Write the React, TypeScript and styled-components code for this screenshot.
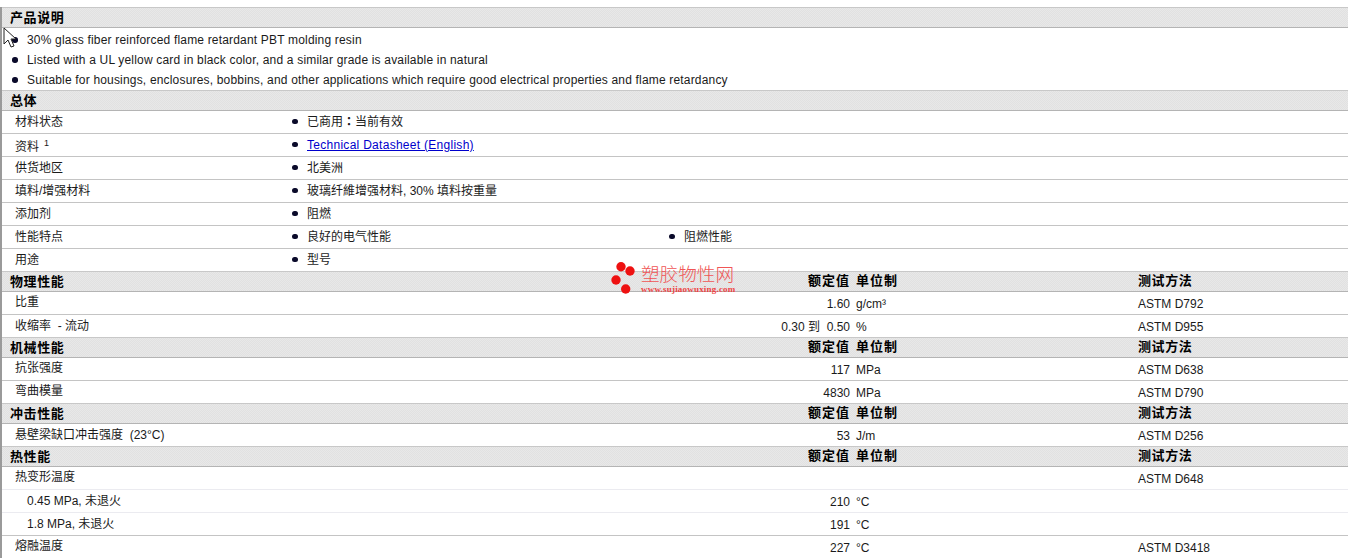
import React from "react";
import styled, { createGlobalStyle } from "styled-components";

const GlobalStyle = createGlobalStyle`
  html, body {
    margin: 0;
    padding: 0;
    background: #fff;
    overflow: hidden;
  }
  body {
    font-family: "Liberation Sans", "Noto Sans CJK SC", sans-serif;
    font-size: 12px;
    line-height: 14px;
    color: #1a1a1a;
  }
`;

const Page = styled.div`
  position: relative;
  width: 1348px;
  height: 558px;
  padding-top: 7px;
  box-sizing: border-box;
  overflow: hidden;
`;

const Sheet = styled.div`
  border-left: 2px solid #9a9a9a;
`;

const SectionHead = styled.div`
  display: grid;
  grid-template-columns: 770px 70px 288px 1fr;
  align-items: center;
  box-sizing: border-box;
  height: 21px;
  padding-left: 8px;
  background-color: #e4e4e4;
  background-image: repeating-conic-gradient(#e1e1e1 0 25%, #e8e8e8 0 50%);
  background-size: 2px 2px;
  border-top: 1px solid #c8c8c8;
  border-bottom: 1px solid #b4b4b4;
  font-weight: 700;
  font-size: 13px;
  letter-spacing: 0.6px;
  color: #000;
`;

const HeadTest = styled.span`
  padding-bottom: 2px;
`;

const HeadValue = styled.span`
  text-align: right;
  letter-spacing: 1px;
  padding-bottom: 2px;
`;

const HeadUnit = styled.span`
  padding-left: 6px;
  padding-bottom: 2px;
  letter-spacing: 1px;
`;

const Notes = styled.ul`
  list-style: none;
  margin: 0;
  padding: 2px 0 0;
`;

const Note = styled.li`
  display: flex;
  align-items: center;
  height: 20px;
  padding-left: 10px;
  letter-spacing: 0.18px;
`;

const Dot = styled.i`
  flex: none;
  width: 5.5px;
  height: 5.5px;
  border-radius: 50%;
  background: #0a0a2a;
  margin-right: 9.5px;
`;

const InfoRow = styled.div`
  display: grid;
  grid-template-columns: 290px 377px 1fr;
  align-items: center;
  box-sizing: border-box;
  height: 23px;
  border-bottom: 1px solid #c4c4c4;
  &:last-child {
    height: 22px;
    border-bottom: 0;
  }
`;

const InfoLabel = styled.span<{ $low?: boolean }>`
  padding-left: 13px;
  padding-top: ${(p) => (p.$low ? 4 : 0)}px;
  padding-bottom: ${(p) => (p.$low ? 0 : 1)}px;
`;

const InfoValue = styled.span`
  display: flex;
  align-items: center;
  padding-bottom: 1px;
`;

const WideColon = styled.span`
  font-family: "Noto Sans CJK TC", sans-serif;
  font-weight: 700;
`;

const Sup = styled.sup`
  font-size: 9px;
  line-height: 0;
  margin-left: 5px;
`;

const DocLink = styled.a`
  color: #00c;
  text-decoration: underline;
  letter-spacing: 0.28px;
`;

const DataRow = styled.div<{ $light?: boolean }>`
  display: grid;
  grid-template-columns: 848px 288px 1fr;
  align-items: center;
  box-sizing: border-box;
  height: 23px;
  padding-top: 2px;
  border-bottom: 1px solid ${(p) => (p.$light ? "#ebebf0" : "#c4c4c4")};
  &:last-child {
    height: 22px;
    border-bottom: 0;
  }
`;

const DataCell = styled.div`
  display: grid;
  grid-template-columns: 1fr auto;
  align-items: center;
`;

const DataName = styled.span<{ $indent?: boolean; $mixed?: boolean }>`
  padding-left: ${(p) => (p.$indent ? 25 : 13)}px;
  padding-bottom: ${(p) => (p.$mixed ? 2 : 4)}px;
  white-space: pre;
`;

const DataValue = styled.span`
  text-align: right;
  white-space: pre;
`;

const DataUnit = styled.span`
  padding-left: 6px;
`;

const Watermark = styled.div`
  position: absolute;
  left: 611px;
  top: 261px;
  display: flex;
  align-items: flex-start;
  gap: 4px;
`;

const WatermarkText = styled.div`
  display: flex;
  flex-direction: column;
  padding-top: 4px;
  color: #f05555;
`;

const WatermarkName = styled.span`
  font-size: 18.6px;
  line-height: 20px;
  font-weight: 300;
`;

const WatermarkUrl = styled.span`
  font-family: "Liberation Serif", serif;
  font-size: 9px;
  line-height: 9px;
  font-weight: 700;
  letter-spacing: 0.2px;
  color: #ee4444;
`;

const Cursor = styled.svg`
  position: absolute;
  left: 3px;
  top: 27px;
`;

const InfoBlock = ({
  label,
  sup,
  values,
}: {
  label: string;
  sup?: string;
  values: React.ReactNode[];
}) => (
  <InfoRow>
    <InfoLabel $low={!!sup}>
      {label}
      {sup && <Sup>{sup}</Sup>}
    </InfoLabel>
    {values.map((v, i) => (
      <InfoValue key={i}>
        <Dot />
        <span>{v}</span>
      </InfoValue>
    ))}
  </InfoRow>
);

const Head = ({ title, cols = true }: { title: string; cols?: boolean }) => (
  <SectionHead>
    <span>{title}</span>
    {cols ? <HeadValue>额定值</HeadValue> : <span />}
    {cols ? <HeadUnit>单位制</HeadUnit> : <span />}
    {cols ? <HeadTest>测试方法</HeadTest> : <span />}
  </SectionHead>
);

const Data = ({
  name,
  value,
  unit,
  test,
  indent,
  mixed,
  light,
}: {
  name: string;
  value?: string;
  unit?: string;
  test?: string;
  indent?: boolean;
  mixed?: boolean;
  light?: boolean;
}) => (
  <DataRow $light={light}>
    <DataCell>
      <DataName $indent={indent} $mixed={mixed}>
        {name}
      </DataName>
      <DataValue>{value}</DataValue>
    </DataCell>
    <DataUnit>{unit}</DataUnit>
    <span>{test}</span>
  </DataRow>
);

export default function App() {
  return (
    <>
      <GlobalStyle />
      <Page>
        <Sheet>
          <Head title="产品说明" cols={false} />
          <Notes>
            <Note>
              <Dot />
              30% glass fiber reinforced flame retardant PBT molding resin
            </Note>
            <Note>
              <Dot />
              Listed with a UL yellow card in black color, and a similar grade is available in natural
            </Note>
            <Note>
              <Dot />
              Suitable for housings, enclosures, bobbins, and other applications which require good electrical properties and flame retardancy
            </Note>
          </Notes>
          <Head title="总体" cols={false} />
          <div>
            <InfoBlock
              label="材料状态"
              values={[
                <>
                  已商用<WideColon>：</WideColon>当前有效
                </>,
              ]}
            />
            <InfoBlock
              label="资料"
              sup="1"
              values={[<DocLink href="#">Technical Datasheet (English)</DocLink>]}
            />
            <InfoBlock label="供货地区" values={["北美洲"]} />
            <InfoBlock label="填料/增强材料" values={["玻璃纤維增强材料, 30% 填料按重量"]} />
            <InfoBlock label="添加剂" values={["阻燃"]} />
            <InfoBlock label="性能特点" values={["良好的电气性能", "阻燃性能"]} />
            <InfoBlock label="用途" values={["型号"]} />
          </div>
          <Head title="物理性能" />
          <div>
            <Data name="比重" value="1.60" unit="g/cm³" test="ASTM D792" />
            <Data name="收缩率  - 流动" value="0.30 到  0.50" unit="%" test="ASTM D955" mixed />
          </div>
          <Head title="机械性能" />
          <div>
            <Data name="抗张强度" value="117" unit="MPa" test="ASTM D638" />
            <Data name="弯曲模量" value="4830" unit="MPa" test="ASTM D790" />
          </div>
          <Head title="冲击性能" />
          <div>
            <Data name="悬壁梁缺口冲击强度  (23°C)" value="53" unit="J/m" test="ASTM D256" mixed />
          </div>
          <Head title="热性能" />
          <div>
            <Data name="热变形温度" test="ASTM D648" light />
            <Data name="0.45 MPa, 未退火" value="210" unit="°C" indent mixed light />
            <Data name="1.8 MPa, 未退火" value="191" unit="°C" indent mixed />
            <Data name="熔融温度" value="227" unit="°C" test="ASTM D3418" />
          </div>
        </Sheet>
        <Watermark>
          <svg width="26" height="34" viewBox="0 0 26 34">
            <circle cx="10" cy="5.7" r="4.7" fill="#ee1111" />
            <circle cx="19" cy="10" r="4.7" fill="#ee1111" />
            <circle cx="5" cy="19" r="4.7" fill="#ee1111" />
            <circle cx="14.7" cy="28" r="4.7" fill="#ee1111" />
          </svg>
          <WatermarkText>
            <WatermarkName>塑胶物性网</WatermarkName>
            <WatermarkUrl>www.sujiaowuxing.com</WatermarkUrl>
          </WatermarkText>
        </Watermark>
        <Cursor width="14" height="22" viewBox="0 0 14 22">
          <path d="M1 1 L1 17 L5 13 L8 20 L11 19 L8 12 L13 12 Z" fill="#fff" stroke="#222" strokeWidth="1" />
        </Cursor>
      </Page>
    </>
  );
}
